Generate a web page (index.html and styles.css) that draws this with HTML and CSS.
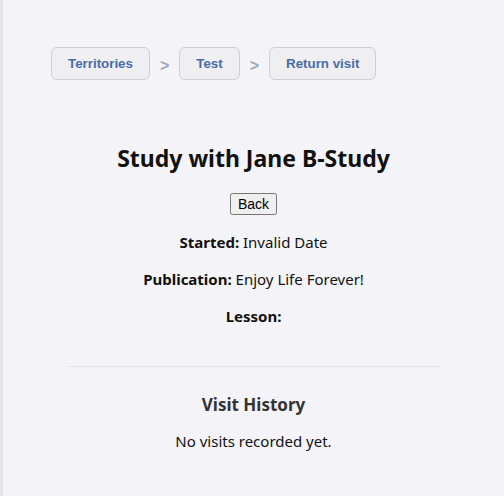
FILE: index.html
```html
<!DOCTYPE html>
<html>
<head>
<meta charset="utf-8">
<link rel="stylesheet" href="styles.css">
</head>
<body>
<div class="page">
  <nav class="crumbs">
    <button class="crumb">Territories</button>
    <span class="sep">&gt;</span>
    <button class="crumb">Test</button>
    <span class="sep">&gt;</span>
    <button class="crumb">Return visit</button>
  </nav>
  <section class="detail">
    <h2 class="title">Study with Jane B-Study</h2>
    <button class="back">Back</button>
    <p class="field"><strong>Started:</strong> Invalid Date</p>
    <p class="field"><strong>Publication:</strong> Enjoy Life Forever!</p>
    <p class="field"><strong>Lesson:</strong> </p>
    <hr class="divider">
    <h3 class="history-title">Visit History</h3>
    <p class="empty">No visits recorded yet.</p>
  </section>
</div>
</body>
</html>
```
FILE: styles.css
```css
html, body {
  margin: 0;
  padding: 0;
  background: #f4f4f8;
}
body {
  font-family: "Noto Sans", "Open Sans", sans-serif;
  color: #111;
}
.page {
  border-left: 3px solid #e4e4e8;
  min-height: 496px;
  box-sizing: border-box;
  padding: 47px 0 0 48px;
}
.crumbs {
  display: flex;
  align-items: center;
}
.crumb {
  height: 33px;
  padding: 0 16px;
  font-family: "Liberation Sans", Arial, sans-serif;
  font-weight: bold;
  font-size: 13.333px;
  color: #4a6da6;
  background: #efeff1;
  border: 1px solid #cfcfd2;
  border-radius: 6px;
}
.sep {
  font-family: "Liberation Sans", Arial, sans-serif;
  font-weight: bold;
  font-size: 16px;
  color: #9aa8bd;
  margin: 5px 10px 0 10px;
}
.detail {
  text-align: center;
  margin-left: -48px;
}
.title {
  font-size: 23px;
  font-weight: bold;
  margin: 62px 0 18px;
  line-height: 32px;
}
.back {
  font-family: "Liberation Sans", Arial, sans-serif;
  font-size: 14px;
  padding: 1px 6px;
}
.field {
  font-size: 15px;
  line-height: 21px;
  margin: 16px 0;
}
.field:first-of-type {
  margin-top: 17px;
}
.divider {
  border: 0;
  border-top: 1px solid #e6e6ea;
  margin: 39px 64px 0;
}
.history-title {
  font-size: 17px;
  color: #333;
  margin: 26px 0 0;
  line-height: 24px;
}
.empty {
  font-size: 15px;
  line-height: 21px;
  margin: 14px 0 0;
}
```
